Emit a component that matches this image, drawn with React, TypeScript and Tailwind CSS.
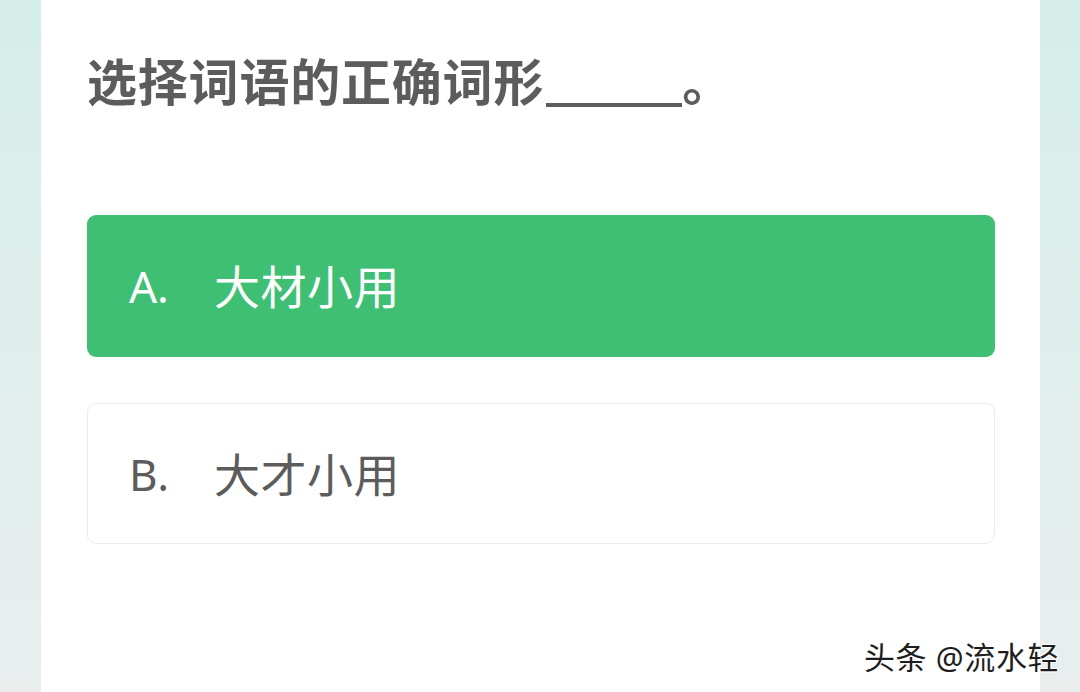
const options = [
  { key: 'A.', text: '大材小用', selected: true },
  { key: 'B.', text: '大才小用', selected: false },
];

export default function App() {
  return (
    <div
      className="relative flex h-[692px] w-[1080px] overflow-hidden bg-gradient-to-b from-[#d5eeea] to-[#e9eeed]"
      style={{ fontFamily: '"Noto Sans", "Noto Sans CJK SC", sans-serif' }}
    >
      <div className="ml-[41px] h-full w-[999px] bg-white pl-[46px] pr-[45px] pt-[52px]">
        <h1 className="flex items-end text-[50px] font-bold leading-[60px] tracking-[0.8px] text-[#5c5c5c]">
          <span>选择词语的正确词形</span>
          <span className="mb-[5px] ml-[2px] inline-block w-[136px] border-b-[4px] border-[#5c5c5c]" />
          <span>。</span>
        </h1>

        <div className="mt-[103px] flex flex-col gap-[46px]">
          {options.map((o) => (
            <div
              key={o.key}
              className={
                o.selected
                  ? 'flex h-[142px] items-center rounded-[9px] bg-[#3fbf74] pl-[42px] text-white'
                  : 'flex h-[141px] items-center rounded-[9px] border border-[#ececec] bg-white pl-[41px] text-[#5c5c5c]'
              }
            >
              <span className="w-[85px] text-[44px] leading-none">{o.key}</span>
              <span className="text-[46px] leading-none tracking-[0.5px]">{o.text}</span>
            </div>
          ))}
        </div>
      </div>

      <div
        className="absolute left-[864px] top-[637px] text-[31px] leading-[40px] tracking-[0.6px] text-[#1e1e1e]"
        style={{ textShadow: '1px 1px 0 #fff, -1px -1px 0 #fff, 1px -1px 0 #fff, -1px 1px 0 #fff' }}
      >
        头条 @流水轻
      </div>
    </div>
  );
}
